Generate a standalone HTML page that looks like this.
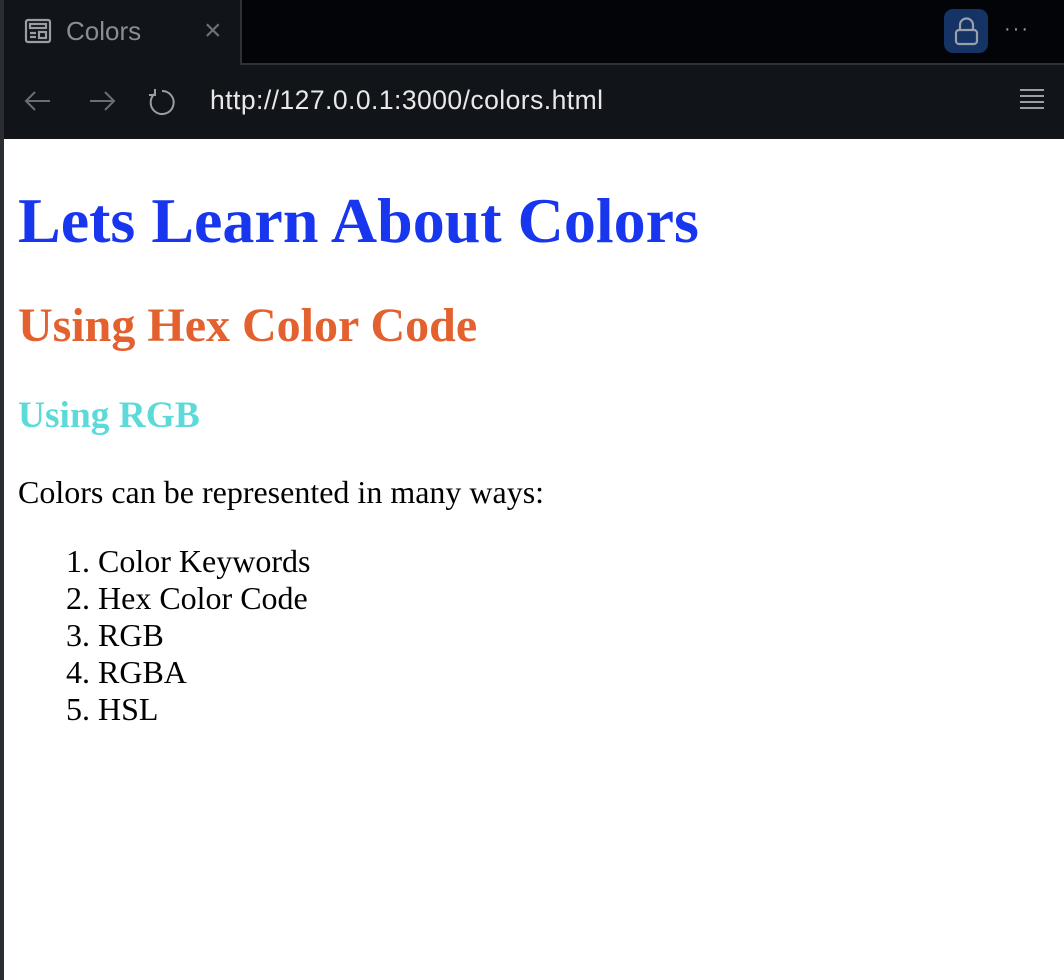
<!DOCTYPE html>
<html><head><style>
*{box-sizing:border-box}
html,body{margin:0;padding:0;background:#fff;width:1064px;height:980px;overflow:hidden}
.top{position:absolute;left:0;top:0;width:1064px;height:65px;background:#020408;border-bottom:2px solid #2e3136}
.tab{position:absolute;left:0;top:0;width:242px;height:65px;background:#111418;border-right:2px solid #2e3136;border-left:4px solid #2a2d31}
.tab .t{position:absolute;left:62px;top:16px;font:26px "Liberation Sans",sans-serif;color:#8a8e94}
.tab .x{position:absolute;left:200px;top:14px;font:30px "Liberation Sans",sans-serif;color:#6e7277}
.lock{position:absolute;left:944px;top:9px;width:44px;height:44px;border-radius:9px;background:#163366}
.bar{position:absolute;left:0;top:65px;width:1064px;height:74px;background:#111418;border-left:4px solid #2a2d31}
.url{position:absolute;left:206px;top:20px;font:26.5px "Liberation Sans",sans-serif;color:#e8e8e8;letter-spacing:0.45px}
.page{position:absolute;left:0;top:139px;width:1064px;height:841px;border-left:4px solid #2a2d31;padding:0 0 0 14px;font-family:"Liberation Serif",serif;font-size:32px;color:#000}
h1{font-size:64px;margin:45px 0 0;color:#1836ee;line-height:74px}
h2{font-size:48px;margin:40px 0 0;color:#e3602f;line-height:55px}
h3{font-size:37.4px;margin:41px 0 0;color:#5cdada;line-height:43px}
p{margin:37px 0 0;line-height:37px}
ol{margin:32px 0 0;padding-left:80px;line-height:37px}
</style></head><body>
<div class="top">
<div class="tab">
<svg style="position:absolute;left:20px;top:18px" width="30" height="28" viewBox="0 0 30 28" fill="none" stroke="#9a9ea4" stroke-width="2.2"><rect x="2" y="2" width="24" height="22" rx="2"/><rect x="6" y="6" width="16" height="4"/><path d="M6 15h6M6 19h6"/><rect x="15" y="14" width="7" height="6"/></svg>
<div class="t">Colors</div><div class="x">×</div>
</div>
<div class="lock"><svg width="44" height="44" viewBox="0 0 44 44" fill="none" stroke="#9aa0aa" stroke-width="2.2"><rect x="12" y="21" width="21" height="14" rx="3"/><path d="M16 21v-5a6.5 6.5 0 0 1 13 0v5"/></svg></div>
<div style="position:absolute;left:1004px;top:18px;color:#9a9ea4;font:20px 'Liberation Sans',sans-serif;letter-spacing:2px">···</div>
</div>
<div class="bar">
<svg style="position:absolute;left:18px;top:21px" width="160" height="32" viewBox="0 0 160 32" fill="none" stroke="#6a6e74" stroke-width="2"><path d="M28 15H4M13 6l-9 9 9 9"/><path d="M68 15h24M83 6l9 9-9 9"/><path stroke="#9a9ea4" d="M140 5a11.5 11.5 0 1 1-7 2.5M133 3v6h-6"/></svg>
<div class="url">http://127.0.0.1:3000/colors.html</div>
<svg style="position:absolute;left:1014px;top:22px" width="28" height="26" stroke="#9a9ea4" stroke-width="2"><path d="M2 3h24M2 9h24M2 15h24M2 21h24"/></svg>
</div>
<div class="page">
<h1>Lets Learn About Colors</h1>
<h2>Using Hex Color Code</h2>
<h3>Using RGB</h3>
<p>Colors can be represented in many ways:</p>
<ol><li>Color Keywords</li><li>Hex Color Code</li><li>RGB</li><li>RGBA</li><li>HSL</li></ol>
</div>
</body></html>
